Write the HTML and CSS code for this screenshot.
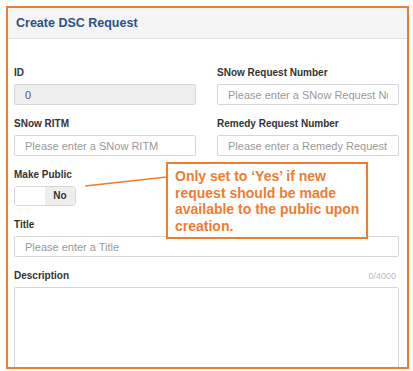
FILE: index.html
```html
<!DOCTYPE html>
<html lang="en">
<head>
  <meta charset="UTF-8" />
  <title>Create DSC Request</title>
  <link rel="stylesheet" href="styles.css">
</head>
<body>
  <div class="frame">
    <div class="panel-head">
      <h1>Create DSC Request</h1>
    </div>

    <div class="panel-body">
      <div class="row">
        <div class="field">
          <label>ID</label>
          <input class="input readonly" type="text" value="0" readonly>
        </div>
        <div class="field">
          <label>SNow Request Number</label>
          <input class="input" type="text" placeholder="Please enter a SNow Request Number">
        </div>
      </div>

      <div class="row">
        <div class="field">
          <label>SNow RITM</label>
          <input class="input" type="text" placeholder="Please enter a SNow RITM">
        </div>
        <div class="field">
          <label>Remedy Request Number</label>
          <input class="input" type="text" placeholder="Please enter a Remedy Request Number">
        </div>
      </div>

      <div class="field">
        <label>Make Public</label>
        <div class="toggle">
          <span class="toggle-off"></span>
          <span class="toggle-on">No</span>
        </div>
      </div>

      <div class="field">
        <label>Title</label>
        <input class="input" type="text" placeholder="Please enter a Title">
      </div>

      <div class="field">
        <div class="label-row">
          <label>Description</label>
          <span class="counter">0/4000</span>
        </div>
        <textarea class="textarea"></textarea>
      </div>
    </div>

    <!-- annotation -->
    <svg class="connector" width="84" height="16" viewBox="0 0 84 16">
      <line x1="1" y1="13" x2="83" y2="4" stroke="#ed7d31" stroke-width="1.6"/>
    </svg>
    <div class="callout">
      Only set to ‘Yes’ if new<br>
      request should be made<br>
      available to the public upon<br>
      creation.
    </div>
  </div>
</body>
</html>
```

FILE: styles.css
```css
* {
  box-sizing: border-box;
}
body {
  margin: 0;
  background: #fff;
  font-family: 'Liberation Sans', Arial, sans-serif;
  color: #333;
}
.frame {
  position: relative;
  margin: 6px 0 0 6px;
  width: 403px;
  height: 363px;
  border: 2px solid #ed7d31;
  overflow: hidden;
  background: #fff;
}
.panel-head {
  height: 31px;
  padding-left: 8px;
  background: #f5f5f5;
  border-bottom: 1px solid #e2e2e2;
}
.panel-head h1 {
  margin: 0;
  font-size: 12.5px;
  line-height: 30px;
  font-weight: bold;
  color: #2b5283;
}
.panel-body {
  padding: 28px 8px 0 6px;
}
.row {
  display: grid;
  grid-template-columns: 182px 182px;
  column-gap: 21px;
}
.field {
  display: flex;
  flex-direction: column;
  margin-bottom: 13px;
}
.field label {
  display: block;
  font-size: 10px;
  line-height: 12px;
  font-weight: bold;
  color: #333;
  margin-bottom: 5px;
}
.label-row {
  display: flex;
  justify-content: space-between;
  align-items: flex-start;
  padding-right: 3px;
}
.counter {
  font-size: 9px;
  line-height: 12px;
  color: #bbb;
}
.input {
  height: 21px;
  width: 100%;
  padding: 0 10px;
  border: 1px solid #d6d6d6;
  border-radius: 2px;
  font-family: 'Liberation Sans', Arial, sans-serif;
  font-size: 11px;
  color: #555;
  background: #fff;
  outline: none;
}
.input::placeholder {
  color: #999;
}
.input.readonly {
  background: #eee;
}
.toggle {
  display: flex;
  width: 62px;
  height: 20px;
  border: 1px solid #d4d4d4;
  border-radius: 4px;
  overflow: hidden;
}
.toggle-off {
  flex: 1;
  background: #fff;
}
.toggle-on {
  flex: 1;
  background: #eee;
  font-size: 10px;
  font-weight: bold;
  line-height: 18px;
  text-align: center;
  color: #333;
}
.textarea {
  display: block;
  width: 100%;
  height: 81px;
  border: 1px solid #d6d6d6;
  border-radius: 2px;
  resize: none;
  outline: none;
}
.connector {
  position: absolute;
  left: 76px;
  top: 165px;
}
.callout {
  position: absolute;
  left: 158px;
  top: 154px;
  width: 202px;
  height: 77px;
  padding: 4px 4px 0 7px;
  border: 2px solid #ed7d31;
  background: #fff;
  font-size: 14px;
  line-height: 16.7px;
  font-weight: bold;
  color: #ed7d31;
}
```
